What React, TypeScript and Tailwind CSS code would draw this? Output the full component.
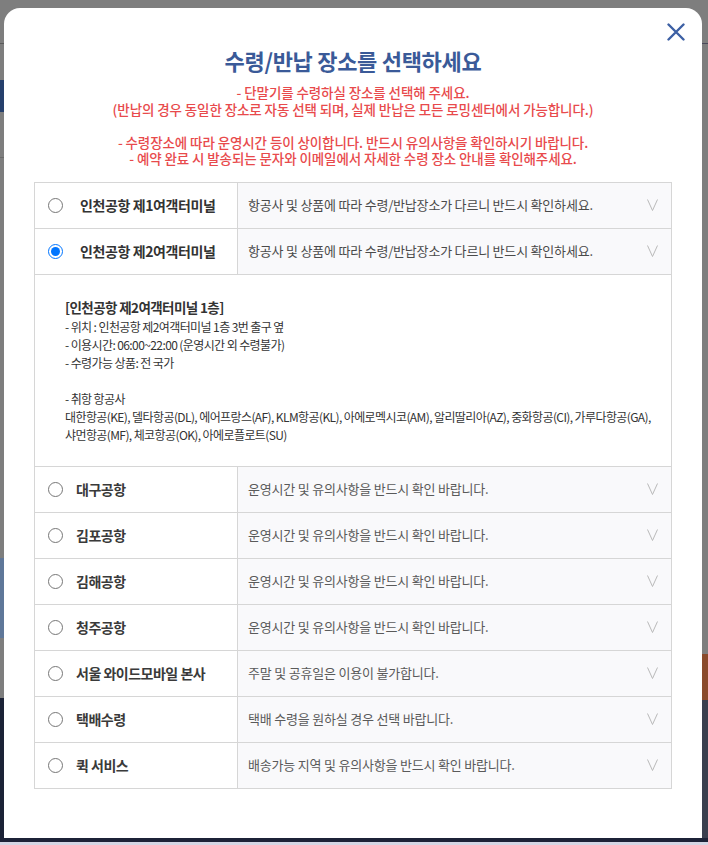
import React from "react";

const KR = { fontFamily: '"Noto Sans CJK KR", "Noto Sans", sans-serif' };

function Chevron() {
  return (
    <svg width="11" height="12" viewBox="0 0 11 12" className="shrink-0">
      <polyline points="0.5,0.5 5.5,11.5 10.5,0.5" fill="none" stroke="#b9b9b9" strokeWidth="1" />
    </svg>
  );
}

type RowProps = { name: string; desc: string; checked?: boolean; big?: boolean };

function Row({ name, desc, checked, big }: RowProps) {
  return (
    <div className="flex h-[46px] border-b border-[#d6d6d6]">
      <div className="flex w-[203px] shrink-0 items-center border-r border-[#d6d6d6] bg-white pl-[13px]">
        <input
          type="radio"
          name="place"
          defaultChecked={checked}
          className="m-0 h-[15px] w-[15px] shrink-0"
        />
        <span
          className={
            big
              ? "ml-[17px] text-[14px] font-bold tracking-[-0.4px] text-[#333333]"
              : "ml-[13px] text-[14px] font-bold tracking-[-0.5px] text-[#3a3a3a]"
          }
        >
          {name}
        </span>
      </div>
      <div className="flex flex-1 items-center justify-between bg-[#f9f9fb] pl-[10px] pr-[13px]">
        <span className={big ? "text-[13px] tracking-[-0.2px] text-[#4a4a4a]" : "text-[13px] tracking-[-0.2px] text-[#5a5a5a]"}>
          {desc}
        </span>
        <Chevron />
      </div>
    </div>
  );
}

export default function App() {
  return (
    <div className="relative h-[845px] w-[708px] overflow-hidden bg-[#7e7e7e]" style={KR}>
      {/* dimmed page behind */}
      <div className="flex h-[838px] justify-between">
        <div className="flex w-[6px] flex-col">
          <div className="h-[43px] bg-[#7e7e7e]" />
          <div className="h-[1px] bg-[#5a5a5a]" />
          <div className="h-[36px] bg-[#7e7e7e]" />
          <div className="h-[32px] bg-[#26406c]" />
          <div className="h-[45px] bg-[#7e7e7e]" />
          <div className="h-[1px] bg-[#6a6a6a]" />
          <div className="h-[400px] bg-[#7e7e7e]" />
          <div className="h-[80px] bg-[#5f7799]" />
          <div className="h-[60px] bg-[#7e7e7e]" />
          <div className="flex-1 bg-[#1b2236]" />
        </div>
        <div className="flex w-[6px] flex-col">
          <div className="h-[43px] bg-[#7e7e7e]" />
          <div className="h-[1px] bg-[#4a4a5a]" />
          <div className="h-[610px] bg-[#7e7e7e]" />
          <div className="h-[46px] bg-[#8a4a2c]" />
          <div className="flex-1 bg-[#3a3f4e]" />
        </div>
      </div>
      <div className="h-[4px] bg-[#1c2237]" />
      <div className="h-[3px] bg-[#d4d6e4]" />

      {/* modal */}
      <div className="absolute left-[4px] top-[8px] flex h-[830px] w-[698px] flex-col items-center rounded-t-[16px] bg-white">
        <button className="absolute right-[17px] top-[15px] h-[18px] w-[18px]" aria-label="close">
          <svg width="18" height="18" viewBox="0 0 18 18">
            <path d="M1.5 1.5 L16.5 16.5 M16.5 1.5 L1.5 16.5" stroke="#3d60a4" strokeWidth="2.4" strokeLinecap="round" />
          </svg>
        </button>

        <h1 className="mt-[38px] text-[22px] font-bold leading-[28px] tracking-[-0.3px] text-[#3a5a98]">
          수령/반납 장소를 선택하세요
        </h1>

        <div className="mt-[10px] text-center text-[13.5px] font-medium leading-[16.5px] tracking-[-0.1px] text-[#e84a4c]">
          <p>- 단말기를 수령하실 장소를 선택해 주세요.</p>
          <p>(반납의 경우 동일한 장소로 자동 선택 되며, 실제 반납은 모든 로밍센터에서 가능합니다.)</p>
          <p className="h-[16.5px]" />
          <p>- 수령장소에 따라 운영시간 등이 상이합니다. 반드시 유의사항을 확인하시기 바랍니다.</p>
          <p>- 예약 완료 시 발송되는 문자와 이메일에서 자세한 수령 장소 안내를 확인해주세요.</p>
        </div>

        <div className="mt-[15px] w-[638px] border-x border-t border-[#d6d6d6]">
          <Row big name="인천공항 제1여객터미널" desc="항공사 및 상품에 따라 수령/반납장소가 다르니 반드시 확인하세요." />
          <Row big checked name="인천공항 제2여객터미널" desc="항공사 및 상품에 따라 수령/반납장소가 다르니 반드시 확인하세요." />
          <div className="h-[192px] border-b border-[#d6d6d6] bg-white pl-[30px] pt-[23px] text-[12px] leading-[18px] tracking-[-0.6px] text-[#333333]">
            <p className="mb-[2px] text-[13.5px] font-bold">[인천공항 제2여객터미널 1층]</p>
            <p>- 위치 : 인천공항 제2여객터미널 1층 3번 출구 옆</p>
            <p>- 이용시간: 06:00~22:00 (운영시간 외 수령불가)</p>
            <p>- 수령가능 상품: 전 국가</p>
            <p className="h-[18px]" />
            <p>- 취항 항공사</p>
            <p className="whitespace-nowrap">
              대한항공(KE), 델타항공(DL), 에어프랑스(AF), KLM항공(KL), 아에로멕시코(AM), 알리딸리아(AZ), 중화항공(CI), 가루다항공(GA),
            </p>
            <p className="whitespace-nowrap">샤먼항공(MF), 체코항공(OK), 아에로플로트(SU)</p>
          </div>
          <Row name="대구공항" desc="운영시간 및 유의사항을 반드시 확인 바랍니다." />
          <Row name="김포공항" desc="운영시간 및 유의사항을 반드시 확인 바랍니다." />
          <Row name="김해공항" desc="운영시간 및 유의사항을 반드시 확인 바랍니다." />
          <Row name="청주공항" desc="운영시간 및 유의사항을 반드시 확인 바랍니다." />
          <Row name="서울 와이드모바일 본사" desc="주말 및 공휴일은 이용이 불가합니다." />
          <Row name="택배수령" desc="택배 수령을 원하실 경우 선택 바랍니다." />
          <Row name="퀵 서비스" desc="배송가능 지역 및 유의사항을 반드시 확인 바랍니다." />
        </div>
      </div>
    </div>
  );
}
